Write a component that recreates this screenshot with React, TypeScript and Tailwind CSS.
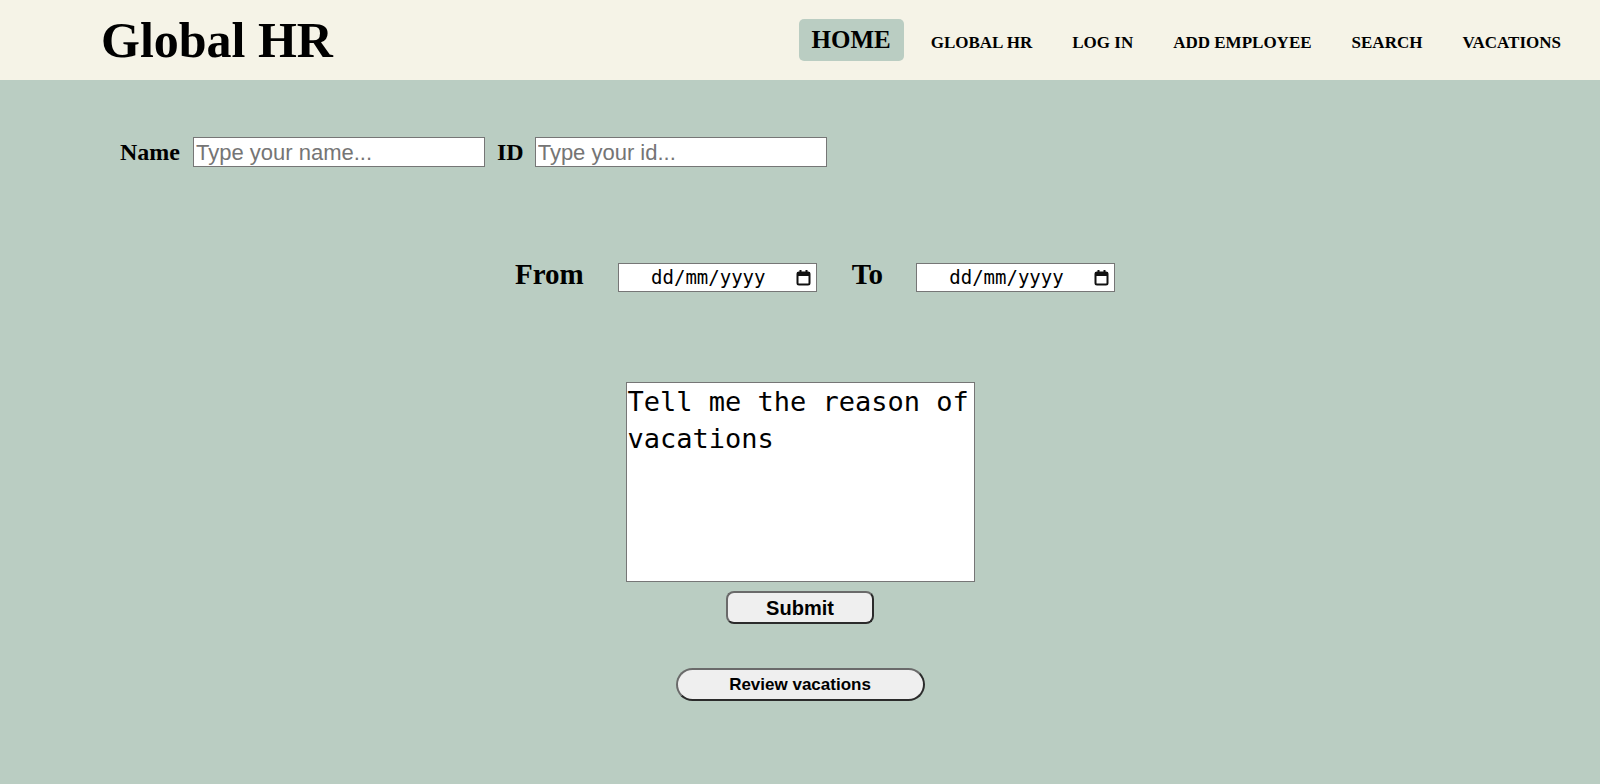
import React from 'react';

const serif = "font-['Liberation_Serif','Times_New_Roman',serif]";
const sans = "font-['Liberation_Sans',Arial,sans-serif]";
const mono = "font-['DejaVu_Sans_Mono','Liberation_Mono',monospace]";

const links = ['GLOBAL HR', 'LOG IN', 'ADD EMPLOYEE', 'SEARCH', 'VACATIONS'];

const CalendarIcon = () => (
  <svg width="15" height="17" viewBox="0 0 15 17" className="shrink-0">
    <rect x="1.5" y="3.5" width="12" height="12" rx="1.5" fill="none" stroke="#111" strokeWidth="2" />
    <rect x="1" y="3" width="13" height="4" fill="#111" />
    <rect x="3.5" y="1" width="2" height="3" fill="#111" />
    <rect x="9.5" y="1" width="2" height="3" fill="#111" />
  </svg>
);

const DateField = () => (
  <div className="flex h-[29px] w-[199px] items-center border border-[#767676] bg-white pl-[2px] pr-[5px]">
    <span className={`${mono} flex-1 text-center text-[19px] text-black`}>dd/mm/yyyy</span>
    <CalendarIcon />
  </div>
);

export default function App() {
  return (
    <div className={`${serif} min-h-screen bg-[#bacdc2] text-black`}>
      <header className="flex h-[80px] items-center justify-between bg-[#f5f3e7] pl-[101px] pr-[26px]">
        <h1 className="text-[50px] font-bold leading-none">Global HR</h1>
        <nav className="flex items-baseline gap-[14px]">
          <a className="rounded-[5px] bg-[#bacdc2] px-[13px] py-[2px] text-[25px] font-bold">HOME</a>
          {links.map((l) => (
            <a key={l} className="px-[13px] text-[17px] font-bold">
              {l}
            </a>
          ))}
        </nav>
      </header>

      <main className="flex flex-col">
        <div className="mt-[57px] flex h-[30px] items-center pl-[120px]">
          <label className="text-[24px] font-bold">Name</label>
          <input
            placeholder="Type your name..."
            className={`${sans} ml-[13px] h-[30px] w-[292px] border border-[#767676] bg-white px-[2px] text-[22px] placeholder:text-[#757575]`}
          />
          <label className="ml-[12px] text-[24px] font-bold">ID</label>
          <input
            placeholder="Type your id..."
            className={`${sans} ml-[11px] h-[30px] w-[292px] border border-[#767676] bg-white px-[2px] text-[22px] placeholder:text-[#757575]`}
          />
        </div>

        <div className="mt-[96px] flex h-[29px] items-center justify-center pl-[30px]">
          <label className="mb-[6px] text-[29px] font-bold">From</label>
          <div className="ml-[34px]">
            <DateField />
          </div>
          <label className="mb-[6px] ml-[35px] text-[29px] font-bold">To</label>
          <div className="ml-[33px]">
            <DateField />
          </div>
        </div>

        <div className="mt-[90px] flex flex-col items-center">
          <textarea
            placeholder="Tell me the reason of vacations"
            className={`${mono} h-[200px] w-[349px] resize-none border border-[#767676] bg-white px-[1px] py-0 text-[27px] leading-[37px] placeholder:text-black`}
          />
          <button
            className={`${sans} mt-[9px] h-[33px] w-[148px] rounded-[8px] border-2 border-[#2b2b2b] border-l-[#6a6a6a] border-t-[#6a6a6a] bg-[#efefef] text-[20px] font-bold`}
          >
            Submit
          </button>
          <button
            className={`${sans} mt-[44px] h-[33px] w-[249px] rounded-full border-2 border-[#2b2b2b] border-l-[#6a6a6a] border-t-[#6a6a6a] bg-[#efefef] text-[17px] font-bold`}
          >
            Review vacations
          </button>
        </div>
      </main>
    </div>
  );
}
